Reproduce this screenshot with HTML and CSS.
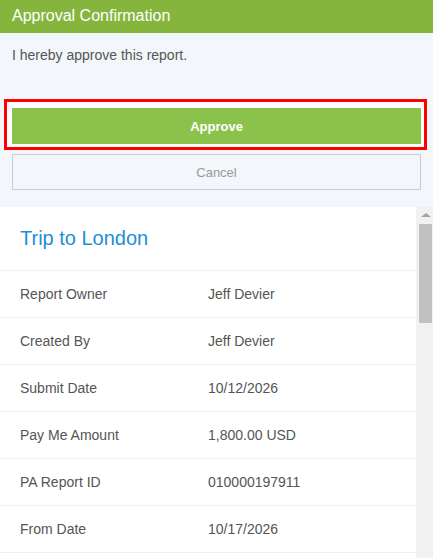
FILE: index.html
```html
<!DOCTYPE html>
<html lang="en">
<head>
    <meta charset="UTF-8">
    <meta name="viewport" content="width=device-width, initial-scale=1.0">
    <title>Approval Confirmation</title>
    <link rel="stylesheet" href="styles.css">
</head>
<body>

    <div class="dialog">
        <div class="dialog-title">Approval Confirmation</div>
        <p class="dialog-text">I hereby approve this report.</p>
        <div class="highlight">
            <button class="btn btn-approve">Approve</button>
        </div>
        <button class="btn btn-cancel">Cancel</button>
    </div>

    <div class="report">
        <div class="report-body">
            <h1 class="report-name">Trip to London</h1>
            <div class="row"><span class="label">Report Owner</span><span class="value">Jeff Devier</span></div>
            <div class="row"><span class="label">Created By</span><span class="value">Jeff Devier</span></div>
            <div class="row"><span class="label">Submit Date</span><span class="value">10/12/2026</span></div>
            <div class="row"><span class="label">Pay Me Amount</span><span class="value">1,800.00 USD</span></div>
            <div class="row"><span class="label">PA Report ID</span><span class="value">010000197911</span></div>
            <div class="row"><span class="label">From Date</span><span class="value">10/17/2026</span></div>
        </div>
        <div class="scrollbar">
            <div class="arrow"></div>
            <div class="thumb"></div>
        </div>
    </div>

</body>
</html>
```

FILE: styles.css
```css
body {
    font-family: "Liberation Sans", Arial, sans-serif;
    margin: 0;
    background-color: #fff;
    height: 558px;
    overflow: hidden;
    display: flex;
    flex-direction: column;
}
.dialog {
    background-color: #f3f6fa;
    padding-bottom: 17px;
}
.dialog-title {
    background-color: #86b53e;
    color: #fff;
    font-size: 16px;
    height: 33px;
    line-height: 32px;
    padding-left: 12px;
}
.dialog-text {
    margin: 0;
    padding: 14px 12px 0;
    height: 52px;
    font-size: 14px;
    line-height: 16px;
    color: #555;
}
.highlight {
    margin: 0 6px 0 4px;
    border: 3px solid #f00;
    padding: 6px 3px 3px 5px;
    background-color: #fff;
}
.btn {
    display: block;
    width: 100%;
    height: 36px;
    font-family: inherit;
    font-size: 13px;
    border-radius: 0;
    cursor: pointer;
}
.btn-approve {
    border: none;
    background-color: #8bc24b;
    color: #fff;
    font-weight: bold;
}
.btn-cancel {
    margin: 4px 12px 0;
    width: calc(100% - 24px);
    background-color: transparent;
    border: 1px solid #c9cbcd;
    color: #999;
}
.report {
    flex: 1;
    display: flex;
    min-height: 0;
}
.report-body {
    width: 416px;
    overflow: hidden;
}
.report-name {
    margin: 0;
    height: 63px;
    line-height: 63px;
    padding-left: 20px;
    font-size: 20px;
    font-weight: normal;
    color: #1b8fd6;
    border-bottom: 1px solid #f0f1f2;
}
.row {
    display: flex;
    height: 46px;
    align-items: center;
    padding-left: 20px;
    font-size: 14px;
    color: #555;
    border-bottom: 1px solid #f0f1f2;
}
.label {
    width: 188px;
}
.scrollbar {
    width: 17px;
    background-color: #f1f1f1;
    padding: 0 1px 0 3px;
    box-sizing: border-box;
}
.arrow {
    width: 0;
    height: 0;
    margin: 6px auto 0 2px;
    border-left: 5px solid transparent;
    border-right: 5px solid transparent;
    border-bottom: 4px solid #a3a3a3;
}
.thumb {
    margin-top: 7px;
    height: 99px;
    background-color: #c1c1c1;
}
```
